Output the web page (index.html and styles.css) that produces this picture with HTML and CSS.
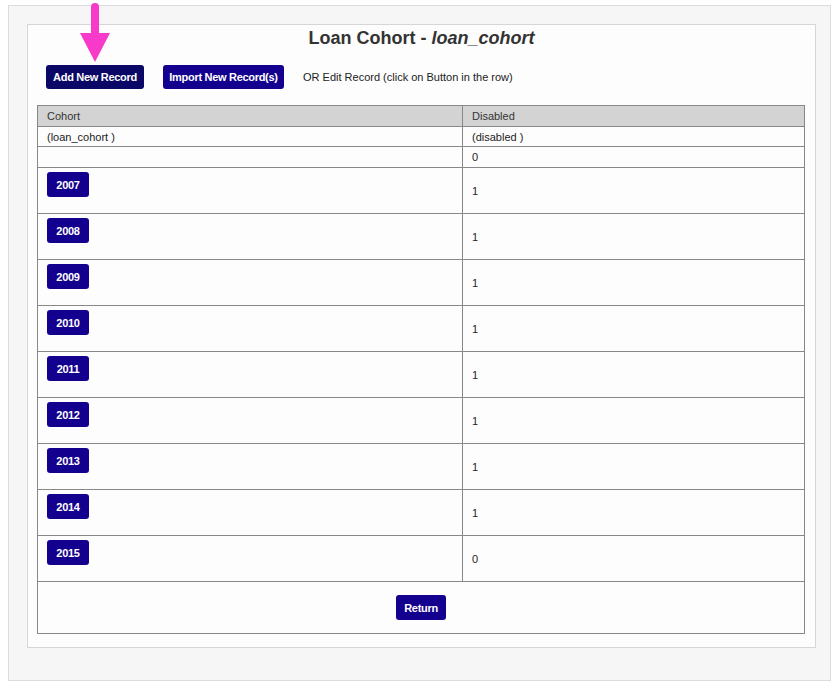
FILE: index.html
```html
<!DOCTYPE html>
<html>
<head>
<meta charset="utf-8">
<link rel="stylesheet" href="styles.css">
</head>
<body>
<div class="outer">
  <div class="inner">
    <h1 class="title">Loan Cohort - <em>loan_cohort</em></h1>
    <div class="toolbar">
      <button class="btn btn-dark">Add New Record</button>
      <button class="btn">Import New Record(s)</button>
      <span class="hint">OR Edit Record (click on Button in the row)</span>
    </div>
    <table class="grid">
      <thead>
        <tr><th class="c1">Cohort</th><th>Disabled</th></tr>
      </thead>
      <tbody>
        <tr class="meta"><td>(loan_cohort )</td><td>(disabled )</td></tr>
        <tr class="meta meta-2"><td></td><td>0</td></tr>
        <tr class="rec"><td><button class="btn btn-row">2007</button></td><td>1</td></tr>
        <tr class="rec"><td><button class="btn btn-row">2008</button></td><td>1</td></tr>
        <tr class="rec"><td><button class="btn btn-row">2009</button></td><td>1</td></tr>
        <tr class="rec"><td><button class="btn btn-row">2010</button></td><td>1</td></tr>
        <tr class="rec"><td><button class="btn btn-row">2011</button></td><td>1</td></tr>
        <tr class="rec"><td><button class="btn btn-row">2012</button></td><td>1</td></tr>
        <tr class="rec"><td><button class="btn btn-row">2013</button></td><td>1</td></tr>
        <tr class="rec"><td><button class="btn btn-row">2014</button></td><td>1</td></tr>
        <tr class="rec"><td><button class="btn btn-row">2015</button></td><td>0</td></tr>
        <tr class="foot"><td colspan="2"><button class="btn btn-return">Return</button></td></tr>
      </tbody>
    </table>
  </div>
</div>
<svg class="arrow" width="34" height="64" viewBox="0 0 34 64">
  <line x1="17" y1="7" x2="17" y2="36" stroke="#f73ac9" stroke-width="8" stroke-linecap="round"/>
  <polygon points="2,33 32,33 17,62" fill="#f73ac9"/>
</svg>
</body>
</html>
```
FILE: styles.css
```css
html, body {
  margin: 0;
  padding: 0;
  background: #ffffff;
}
body {
  padding: 5px 7px 0 8px;
  font-family: "Liberation Sans", Arial, sans-serif;
  font-size: 11px;
  color: #222;
  position: relative;
}
.outer {
  width: 823px;
  height: 676px;
  background: #f6f6f6;
  border: 1px solid #dcdcdc;
  padding: 18px 0 0 18px;
  box-sizing: border-box;
}
.inner {
  width: 789px;
  height: 624px;
  background: #fdfdfd;
  border: 1px solid #d6d6d6;
  box-sizing: border-box;
  padding: 0 9px 0 9px;
}
.title {
  margin: 0;
  padding-top: 2px;
  height: 29px;
  line-height: 22px;
  text-align: center;
  font-size: 18px;
  font-weight: bold;
  color: #333;
}
.title em {
  font-style: italic;
}
.toolbar {
  display: flex;
  align-items: center;
  gap: 19px;
  height: 24px;
  padding-left: 9px;
  margin-top: 9px;
  margin-bottom: 16px;
}
.btn {
  font-family: "Liberation Sans", Arial, sans-serif;
  font-size: 11px;
  font-weight: bold;
  color: #ffffff;
  background: #14008f;
  border: none;
  border-radius: 3px;
  height: 24px;
  padding: 0 9px;
  letter-spacing: -0.3px;
  cursor: pointer;
}
.btn-dark {
  background: #0b0766;
  width: 98px;
  padding: 0;
}
.toolbar .btn:nth-child(2) {
  width: 121px;
  padding: 0;
}
.hint {
  color: #222;
  font-size: 11px;
}
.grid {
  width: 768px;
  border-collapse: collapse;
  border: 1px solid #888;
}
.grid th, .grid td {
  border: 1px solid #888;
  text-align: left;
  padding: 0 9px;
  font-size: 11px;
  color: #222;
}
.grid th {
  background: #d3d3d3;
  font-weight: normal;
  height: 20px;
  color: #333;
}
.grid th.c1 {
  width: 406px;
}
.meta td {
  height: 19px;
}
.meta-2 td {
  height: 20px;
}
.rec td {
  height: 45px;
  vertical-align: middle;
}
.rec td:first-child {
  vertical-align: top;
  padding-top: 4px;
  box-sizing: border-box;
}
.btn-row {
  width: 42px;
  padding: 0;
  height: 25px;
}
.foot td {
  height: 51px;
  text-align: center;
  vertical-align: middle;
}
.btn-return {
  width: 50px;
  padding: 0;
  height: 25px;
}
.arrow {
  position: absolute;
  left: 78px;
  top: 0;
}
```
